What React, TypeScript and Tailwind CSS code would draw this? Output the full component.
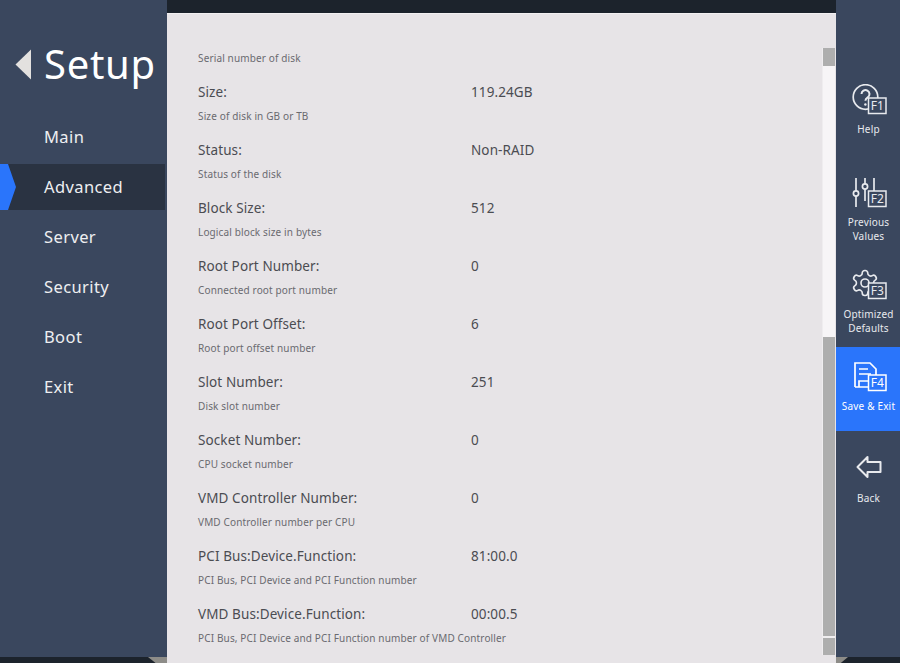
const menuItems = ['Main', 'Advanced', 'Server', 'Security', 'Boot', 'Exit'];

const rows = [
  { label: 'Size:', value: '119.24GB', desc: 'Size of disk in GB or TB' },
  { label: 'Status:', value: 'Non-RAID', desc: 'Status of the disk' },
  { label: 'Block Size:', value: '512', desc: 'Logical block size in bytes' },
  { label: 'Root Port Number:', value: '0', desc: 'Connected root port number' },
  { label: 'Root Port Offset:', value: '6', desc: 'Root port offset number' },
  { label: 'Slot Number:', value: '251', desc: 'Disk slot number' },
  { label: 'Socket Number:', value: '0', desc: 'CPU socket number' },
  { label: 'VMD Controller Number:', value: '0', desc: 'VMD Controller number per CPU' },
  { label: 'PCI Bus:Device.Function:', value: '81:00.0', desc: 'PCI Bus, PCI Device and PCI Function number' },
  { label: 'VMD Bus:Device.Function:', value: '00:00.5', desc: 'PCI Bus, PCI Device and PCI Function number of VMD Controller' },
];

function KeyBadge({ name, fill }: { name: string; fill: string }) {
  return (
    <>
      <rect x="17.5" y="14" width="17.500" height="15.500" fill={fill} stroke="currentColor" strokeWidth="1.500" />
      <text x="26.300" y="26.300" textAnchor="middle" fontSize="12" fontFamily="Noto Sans, sans-serif" fill="currentColor" stroke="none">
        {name}
      </text>
    </>
  );
}

function HelpIcon() {
  return (
    <svg width="36" height="32" viewBox="0 0 36 32" fill="none" stroke="currentColor" strokeWidth="1.700">
      <circle cx="14.500" cy="13" r="12.300" />
      <path d="M10.500 10a4 4 0 1 1 6.200 3.400c-1.700 1-2.300 1.800-2.300 3.400" strokeWidth="2" />
      <circle cx="14.400" cy="20.500" r="1.200" fill="currentColor" stroke="none" />
      <KeyBadge name="F1" fill="#3a475e" />
    </svg>
  );
}

function SlidersIcon() {
  return (
    <svg width="36" height="32" viewBox="0 0 36 32" fill="none" stroke="currentColor" strokeWidth="1.700">
      <path d="M5 1v13M5 19v11M14 1v6M14 12v12M23 1v13" />
      <circle cx="5" cy="16.500" r="2.600" />
      <circle cx="14" cy="9.500" r="2.600" />
      <KeyBadge name="F2" fill="#3a475e" />
    </svg>
  );
}

function GearIcon() {
  return (
    <svg width="36" height="32" viewBox="0 0 36 32" fill="none" stroke="currentColor" strokeWidth="1.700">
      <g transform="translate(-1 -1) scale(1.25)" strokeWidth="1.300">
        <path d="M12.220 2h-.44a2 2 0 0 0-2 2v.18a2 2 0 0 1-1 1.730l-.43.25a2 2 0 0 1-2 0l-.15-.08a2 2 0 0 0-2.730.73l-.22.38a2 2 0 0 0 .73 2.730l.15.1a2 2 0 0 1 1 1.720v.51a2 2 0 0 1-1 1.740l-.15.09a2 2 0 0 0-.73 2.730l.22.38a2 2 0 0 0 2.730.73l.15-.08a2 2 0 0 1 2 0l.43.25a2 2 0 0 1 1 1.730V20a2 2 0 0 0 2 2h.44a2 2 0 0 0 2-2v-.18a2 2 0 0 1 1-1.730l.43-.25a2 2 0 0 1 2 0l.15.08a2 2 0 0 0 2.730-.73l.22-.39a2 2 0 0 0-.73-2.730l-.15-.08a2 2 0 0 1-1-1.740v-.5a2 2 0 0 1 1-1.740l.15-.09a2 2 0 0 0 .73-2.730l-.22-.38a2 2 0 0 0-2.730-.73l-.15.08a2 2 0 0 1-2 0l-.43-.25a2 2 0 0 1-1-1.730V4a2 2 0 0 0-2-2z" />
        <circle cx="12" cy="12" r="3.200" />
      </g>
      <KeyBadge name="F3" fill="#3a475e" />
    </svg>
  );
}

function SaveIcon() {
  return (
    <svg width="36" height="32" viewBox="0 0 36 32" fill="none" stroke="currentColor" strokeWidth="1.700">
      <path d="M4 26V2h15l6 6v7M4 26h14" />
      <path d="M8 8h9M8 13h12" />
      <path d="M8 26v-6h10" />
      <KeyBadge name="F4" fill="#2a75fb" />
    </svg>
  );
}

function BackIcon() {
  return (
    <svg width="26" height="24" viewBox="0 0 26 24" fill="none" stroke="currentColor" strokeWidth="2" strokeLinejoin="round">
      <path d="M1.500 12L11.500 2V7H24.500V17H11.500V22Z" />
    </svg>
  );
}

const actions = [
  { icon: <HelpIcon />, label: ['Help'], cls: 'h-[168px] pt-[84px]', gap: 'mt-[6px]', active: false },
  { icon: <SlidersIcon />, label: ['Previous', 'Values'], cls: 'h-[92px] pt-[9px]', gap: 'mt-[6px]', active: false },
  { icon: <GearIcon />, label: ['Optimized', 'Defaults'], cls: 'h-[87px] pt-[9px]', gap: 'mt-[6px]', active: false },
  { icon: <SaveIcon />, label: ['Save & Exit'], cls: 'h-[84px] pt-[14px]', gap: 'mt-[6px]', active: true },
  { icon: <BackIcon />, label: ['Back'], cls: 'h-[84px] pt-[20px]', gap: 'mt-[8px]', active: false },
];

export default function App() {
  return (
    <div className="flex h-[663px] w-[900px] overflow-hidden bg-[#e7e4e7] font-['Noto_Sans',sans-serif]">
      <aside className="relative flex h-[663px] w-[167px] shrink-0 flex-col bg-[#1c232c]">
        <div className="flex h-[657px] flex-col bg-[#3a475e]">
          <div className="flex h-[114px] items-start pl-[15px] pt-[49px]">
            <svg width="17" height="31" viewBox="0 0 17 31">
              <polygon points="16,0.500 16,30.500 0.500,15.500" fill="#e3e1df" />
            </svg>
            <span className="ml-[12px] mt-[-15px] text-[40px] leading-[60px] tracking-[0.7px] text-white">Setup</span>
          </div>
          <nav className="flex flex-col gap-[4px]">
            {menuItems.map((item) => (
              <div key={item} className="relative flex h-[46px] items-center">
                {item === 'Advanced' && (
                  <>
                    <div className="absolute bottom-0 left-[8px] right-[2px] top-0 bg-[#2a3342]" />
                    <div className="absolute bottom-0 left-0 top-0 w-[16px] bg-[#2a75fb] [clip-path:polygon(0_0,50%_0,100%_50%,50%_100%,0_100%)]" />
                  </>
                )}
                <span className="relative pl-[44px] text-[16.5px] tracking-[0.4px] text-[#eeeff1]">{item}</span>
              </div>
            ))}
          </nav>
        </div>
        <div className="absolute bottom-0 right-0 h-[6px] w-[19px] bg-[#8d8c88] [clip-path:polygon(0_0,100%_0,100%_100%,100%_100%,40%_100%)]" />
      </aside>

      <main className="flex w-[669px] shrink-0 flex-col">
        <div className="h-[13px] bg-[#1c232c]" />
        <div className="flex min-h-0 flex-1 border-t border-[#f2f0f2]">
          <div className="min-w-0 flex-1 pl-[31px] pt-[35px]">
            <p className="text-[10px] leading-[18px] tracking-[0.14px] text-[#6a6a70]">Serial number of disk</p>
            {rows.map((row) => (
              <div key={row.label} className="mt-[12px] h-[46px]">
                <div className="flex h-[26px] items-center text-[13.5px] tracking-[0.1px] text-[#4b4c52]">
                  <span className="w-[273px]">{row.label}</span>
                  <span>{row.value}</span>
                </div>
                <p className="mt-[2px] text-[10px] leading-[18px] tracking-[0.14px] text-[#6a6a70]">{row.desc}</p>
              </div>
            ))}
          </div>
          <div className="mr-px mt-[34px] flex h-[607px] w-[13px] shrink-0 flex-col border-l border-[#efedef]">
            <div className="h-[18px] bg-[#aeaeae]" />
            <div className="h-[271px] bg-[#f7f5f7]" />
            <div className="h-[299px] bg-[#aeaeae]" />
            <div className="h-[2px] bg-[#f0eef0]" />
            <div className="h-[17px] bg-[#aeaeae]" />
          </div>
        </div>
      </main>

      <aside className="relative h-[663px] w-[64px] shrink-0 bg-[#1c232c]">
        <div className="flex h-[657px] flex-col bg-[#3a475e] text-[#e8eaee]">
          {actions.map((action) => (
            <div
              key={action.label[0]}
              className={`${action.cls} flex flex-col items-center pl-px ${action.active ? 'bg-[#2a75fb] text-white' : ''}`}
            >
              <div className="flex h-[32px] items-center justify-center">{action.icon}</div>
              <div className={`${action.gap} text-center text-[10px] leading-[14px] tracking-[0.18px]`}>
                {action.label.map((line) => (
                  <div key={line} className="whitespace-nowrap">{line}</div>
                ))}
              </div>
            </div>
          ))}
        </div>
        <div className="absolute bottom-0 left-0 h-[6px] w-[12px] bg-[#8d8c88] [clip-path:polygon(0_0,100%_0,40%_100%,0_100%)]" />
      </aside>
    </div>
  );
}
